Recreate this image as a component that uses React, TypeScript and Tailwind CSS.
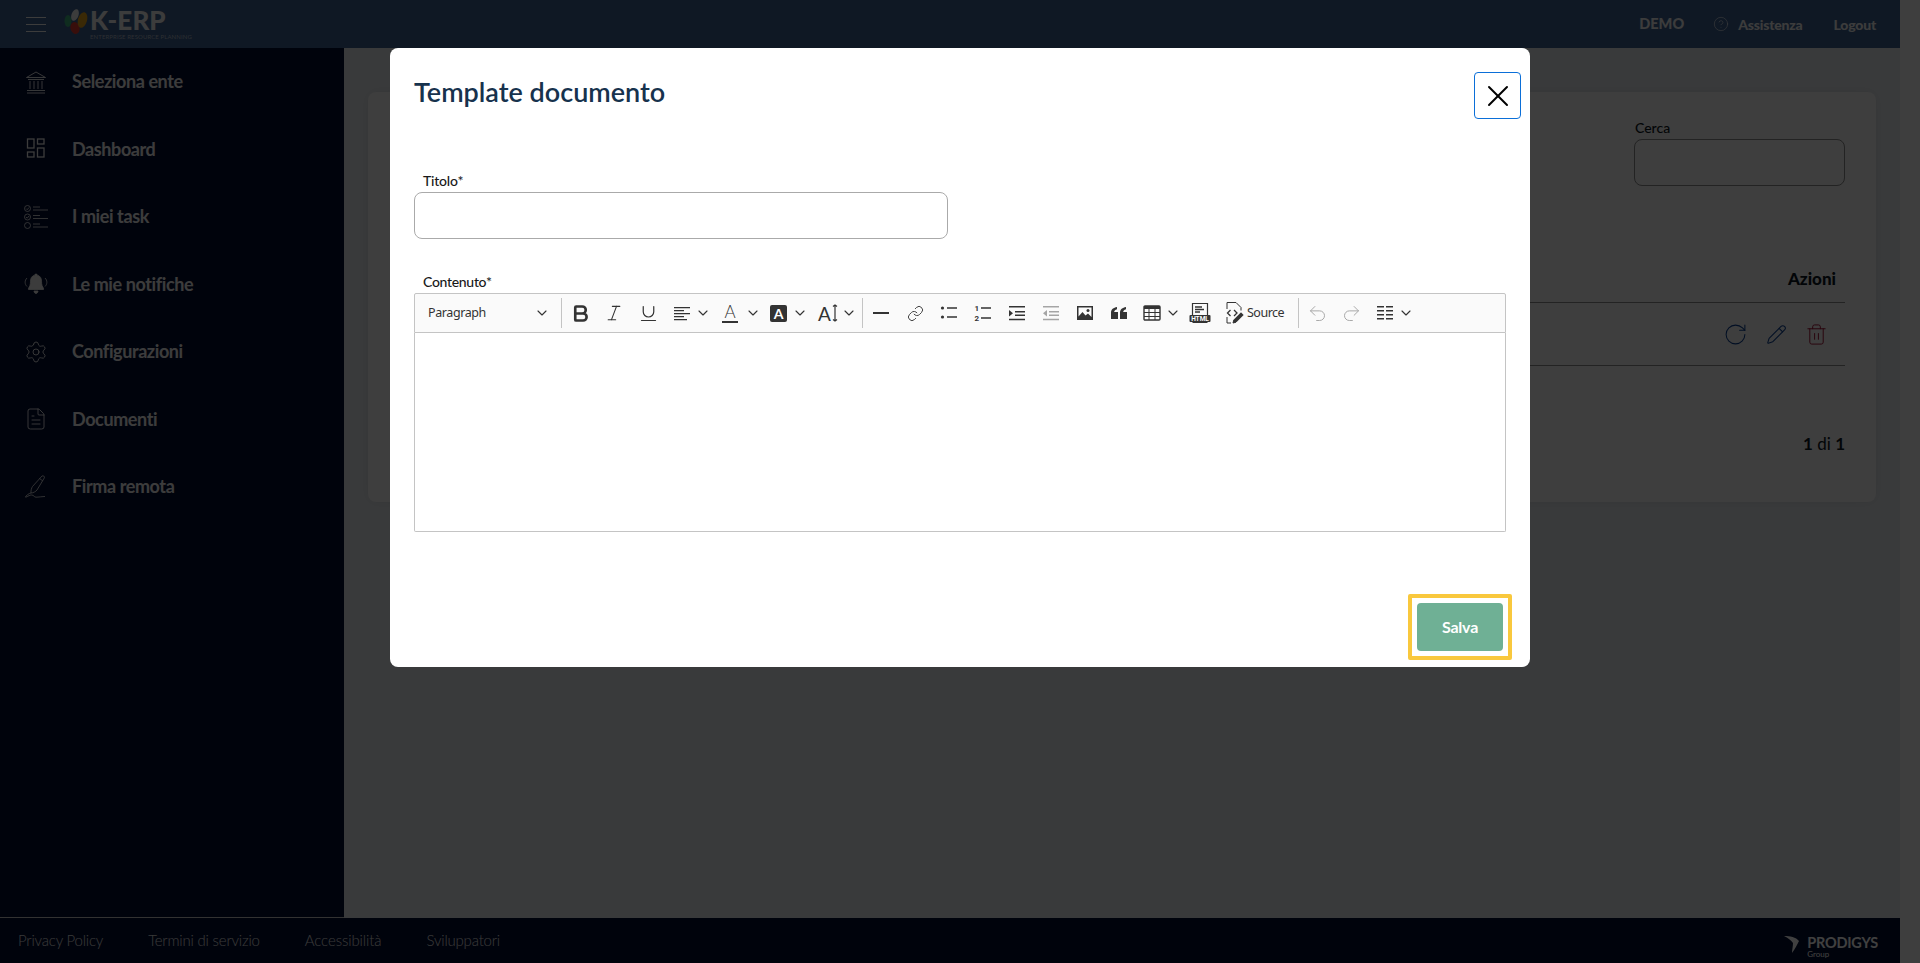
import { ChevronDown, CircleHelp, FileText, Italic, Bold, Underline, Link, Pencil, Redo2, RotateCw, Settings, Trash2, Undo2, X } from "lucide-react";
import type { ReactNode } from "react";

// sidebar icons that lucide does not have in this thin outlined shape
const BankIcon = () => (
  <svg width="24" height="24" viewBox="0 0 24 24" fill="none" stroke="currentColor" strokeWidth="0.900">
    <path d="M2.500 7.500 12 2l9.500 5.500zM4 9.500h16M6 11v8M10 11v8M14 11v8M18 11v8M3 20.500h18M3 23h18" />
  </svg>
);

const GridIcon = () => (
  <svg width="24" height="24" viewBox="0 0 24 24" fill="none" stroke="currentColor" strokeWidth="1.300">
    <rect x="3.500" y="2" width="6.500" height="9" />
    <rect x="13.500" y="2" width="6.500" height="5" />
    <rect x="3.500" y="15" width="6.500" height="5" />
    <rect x="13.500" y="11" width="6.500" height="9" />
  </svg>
);

const TaskIcon = () => (
  <svg width="24" height="24" viewBox="0 0 24 24" fill="none" stroke="currentColor" strokeWidth="0.800">
    <circle cx="3.500" cy="3.500" r="3" />
    <circle cx="3.500" cy="12" r="3" />
    <circle cx="3.500" cy="20.500" r="3" />
    <path d="m2 3.500 1.200 1.200L5 2.500M2 12l1.200 1.200L5 11M9 2h7M9 5h15M9 10.500h7M9 13.500h15M9 19h7M9 22h15" />
  </svg>
);

const BellIcon = () => (
  <svg width="24" height="24" viewBox="0 0 24 24" fill="currentColor" stroke="currentColor" strokeWidth="0.800">
    <path d="M12 2c.8 0 1.300.5 1.300 1.200 3 .7 4.200 3 4.200 6 0 4 1 5.500 2 7v1.300h-15V16.200c1-1.500 2-3 2-7 0-3 1.200-5.300 4.200-6C10.700 2.500 11.200 2 12 2zM10 19h4c0 1.200-.8 2.500-2 2.500s-2-1.300-2-2.500z" />
    <path fill="none" d="M3 6c-2.500 2.500-2.500 6 0 8.500M21 6c2.500 2.500 2.500 6 0 8.500" />
  </svg>
);

const SignIcon = () => (
  <svg width="24" height="24" viewBox="0 0 24 24" fill="none" stroke="currentColor" strokeWidth="0.800">
    <path d="M18 1c1.200-.6 2.800.3 2.400 1.800L13 15c-1 1.500-4 3-6 3-.2-2.500.5-5 1.500-6.500zM15.500 3.500l3.200 2.300M7 18c-2 .2-5.500 3-5.500 4s3.500-2 6-2 2.500 2.200 4.500 2.200 7-.7 9-.7" />
  </svg>
);

const navItems: { label: string; icon: ReactNode }[] = [
  { label: "Seleziona ente", icon: <BankIcon /> },
  { label: "Dashboard", icon: <GridIcon /> },
  { label: "I miei task", icon: <TaskIcon /> },
  { label: "Le mie notifiche", icon: <BellIcon /> },
  { label: "Configurazioni", icon: <Settings size={24} strokeWidth={0.900} /> },
  { label: "Documenti", icon: <FileText size={24} strokeWidth={0.900} /> },
  { label: "Firma remota", icon: <SignIcon /> },
];

const Svg = ({ children }: { children: ReactNode }) => (
  <svg width="20" height="20" viewBox="0 0 20 20" fill="currentColor">
    {children}
  </svg>
);

// editor toolbar icons
const AlignIcon = () => (
  <Svg>
    <path d="M2 4h16v1.300H2zM2 7h10v1.300H2zM2 10h16v1.300H2zM2 13h10v1.300H2zM2 16h13v1.300H2z" />
  </Svg>
);
const HrIcon = () => (
  <Svg>
    <path d="M2 9h16v2H2z" />
  </Svg>
);
const BulletIcon = () => (
  <Svg>
    <circle cx="3.500" cy="5" r="1.600" />
    <circle cx="3.500" cy="14" r="1.600" />
    <path d="M8 4.300h10v1.400H8zM8 13.300h10v1.400H8z" />
  </Svg>
);
const NumberIcon = () => (
  <svg width="20" height="20" viewBox="0 0 20 20" fill="currentColor">
    <path d="M8 4.300h10v1.400H8zM8 14.300h10v1.400H8z" />
    <text x="1.500" y="7.500" fontSize="8" fontWeight="700" fontFamily="Roboto, sans-serif">1</text>
    <text x="1.500" y="18" fontSize="8" fontWeight="700" fontFamily="Roboto, sans-serif">2</text>
  </svg>
);
const IndentIcon = ({ out }: { out?: boolean }) => (
  <Svg>
    <path d="M2 3h16v1.400H2zM8 8h10v1.400H8zM8 11.500h10v1.400H8zM2 15.800h16v1.400H2z" />
    {out ? <path d="M6 7v6.500L2 10.200z" /> : <path d="M2 7v6.500l4-3.300z" />}
  </Svg>
);
const ImageIcon = () => (
  <Svg>
    <path fillRule="evenodd" d="M2 3h16v14H2zm1.500 1.500v9l4-4.500 3 3.500 2.500-2 3.500 3.500V4.500z" />
    <circle cx="13" cy="7.500" r="1.500" />
  </Svg>
);
const QuoteIcon = () => (
  <Svg>
    <path d="M2 16V9.500C2 6.500 4.500 4.500 8 4v2.200C6 6.700 5.200 7.800 5.200 9H9v7zM11 16V9.500C11 6.500 13.500 4.500 17 4v2.200c-2 .5-2.800 1.600-2.800 2.800H18v7z" />
  </Svg>
);
const TableIcon = () => (
  <svg width="20" height="20" viewBox="0 0 20 20" fill="none" stroke="currentColor" strokeWidth="1">
    <rect x="2" y="3" width="16" height="14" rx="1" strokeWidth="1.400" />
    <path d="M2 4.500h16" strokeWidth="3" />
    <path d="M7 6v11M13 6v11M2 9.500h16M2 13.500h16" />
  </svg>
);
const HtmlIcon = () => (
  <svg width="22" height="22" viewBox="0 0 22 22" fill="none" stroke="currentColor" strokeWidth="1.200">
    <path d="M3.500 13V1.500h15V13M3.500 20.500h15" />
    <path d="M6 5h7M6 7.500h9M6 10h5" strokeWidth="1.300" />
    <rect x="0.500" y="13" width="21" height="7" rx="1" fill="currentColor" stroke="none" />
    <text x="11" y="19" textAnchor="middle" fontSize="6.500" fontWeight="700" fill="#fafafa" stroke="none" fontFamily="Roboto, sans-serif">HTML</text>
  </svg>
);
const SourceIcon = () => (
  <svg width="20" height="24" viewBox="0 0 20 24" fill="none" stroke="currentColor" strokeWidth="1" className="shrink-0">
    <path d="M2 8V1.500h9l5 5v3M2 16v6h4" />
    <path d="M5.500 9 2.500 12l3 3M9 9l3 3-3 3" strokeWidth="1.300" />
    <path d="m8 22 .8-3L16 11.800l2.200 2.200L11 21.200z" fill="currentColor" />
  </svg>
);
const BlocksIcon = () => (
  <Svg>
    <path d="M2 3h7v1.500H2zM11 3h7v1.500h-7zM2 7h7v1.500H2zM11 7h7v1.500h-7zM2 11h7v1.500H2zM11 11h7v1.500h-7zM2 15h7v1.500H2zM11 15h7v1.500h-7z" />
  </Svg>
);

const Chevron = () => <ChevronDown size={16} strokeWidth={1.700} className="shrink-0" />;

const ToolButton = ({ children, muted }: { children: ReactNode; muted?: boolean }) => (
  <div className={`flex h-[34px] w-[34px] items-center justify-center ${muted ? "text-[#a5a5a5]" : "text-[#333333]"}`}>
    {children}
  </div>
);

const ToolDropdown = ({ children, className }: { children: ReactNode; className: string }) => (
  <div className={`flex h-[34px] items-center text-[#333333] ${className}`}>
    {children}
    <Chevron />
  </div>
);

const ToolSeparator = () => <div className="mx-[1px] h-[30px] w-px bg-[#c4c4c4]" />;

const EditorToolbar = () => (
  <div className="flex h-[40px] items-center rounded-t-[2px] border border-[#c4c4c4] bg-[#fafafa] pl-[13px]">
    <div className="flex w-[132px] items-center justify-between pr-[10px] text-[#333333]">
      <span className="font-['Noto_Sans',sans-serif] text-[12.500px] tracking-[-0.400px]">Paragraph</span>
      <Chevron />
    </div>
    <ToolSeparator />
    <div className="flex items-center">
      <ToolButton><Bold size={21} strokeWidth={3} /></ToolButton>
      <ToolButton><Italic size={20} strokeWidth={1.300} /></ToolButton>
      <ToolButton><Underline size={21} strokeWidth={1.400} /></ToolButton>
      <ToolDropdown className="w-[47px] gap-[3px] pl-[7px]"><AlignIcon /></ToolDropdown>
      <ToolDropdown className="w-[50px] gap-[7px] pl-[10px]">
        <div className="flex w-[16px] flex-col items-center border-b-2 border-[#333333] text-[17px] leading-[18px] font-light">A</div>
      </ToolDropdown>
      <ToolDropdown className="w-[47px] gap-[5px] pl-[8px]">
        <div className="flex h-[17px] w-[17px] items-center justify-center rounded-[2px] bg-[#333333] text-[14px] font-bold text-white">A</div>
      </ToolDropdown>
      <ToolDropdown className="w-[52px] gap-[3px] pl-[9px]">
        <div className="flex items-center gap-[1px] text-[19px] leading-none">
          A
          <svg width="6" height="18" viewBox="0 0 6 18" fill="none" stroke="currentColor" strokeWidth="1.200">
            <path d="M3 1v16M1 2.500 3 1l2 1.500M1 15.500 3 17l2-1.500" />
          </svg>
        </div>
      </ToolDropdown>
    </div>
    <ToolSeparator />
    <div className="flex items-center">
      <ToolButton><HrIcon /></ToolButton>
      <ToolButton><Link size={17} strokeWidth={1.300} /></ToolButton>
      <ToolButton><BulletIcon /></ToolButton>
      <ToolButton><NumberIcon /></ToolButton>
      <ToolButton><IndentIcon /></ToolButton>
      <ToolButton muted><IndentIcon out /></ToolButton>
      <ToolButton><ImageIcon /></ToolButton>
      <ToolButton><QuoteIcon /></ToolButton>
      <ToolDropdown className="w-[47px] gap-[3px] pl-[6px]"><TableIcon /></ToolDropdown>
      <ToolButton><HtmlIcon /></ToolButton>
      <div className="ml-[8px] flex h-[34px] w-[72px] items-center gap-[2px] text-[#333333]">
        <SourceIcon />
        <span className="font-['Noto_Sans',sans-serif] text-[12.500px] tracking-[-0.500px]">Source</span>
      </div>
    </div>
    <ToolSeparator />
    <div className="flex items-center">
      <ToolButton muted><Undo2 size={21} strokeWidth={1.100} /></ToolButton>
      <ToolButton muted><Redo2 size={21} strokeWidth={1.100} /></ToolButton>
      <ToolDropdown className="w-[47px] gap-[3px] pl-[7px]"><BlocksIcon /></ToolDropdown>
    </div>
  </div>
);

const KerpLogo = () => (
  <div className="flex items-start gap-[2px]">
    <svg width="24" height="26" viewBox="0 0 24 26">
      <ellipse cx="4" cy="13" rx="3.500" ry="6" fill="#3fae7c" />
      <ellipse cx="11" cy="7" rx="3.500" ry="6" fill="#f0f0f0" transform="rotate(20 11 7)" />
      <ellipse cx="11" cy="20" rx="4.500" ry="6" fill="#e03a2f" transform="rotate(-15 11 20)" />
      <ellipse cx="18.500" cy="12" rx="4.500" ry="8" fill="#e8a21a" transform="rotate(15 18.500 12)" />
    </svg>
    <div className="flex flex-col">
      <span className="text-[26px] leading-[25px] font-black tracking-[0.100px] text-[#f0f0f0]">K-ERP</span>
      <span className="text-[6px] leading-[7px] tracking-[0.100px] whitespace-nowrap text-[#b0b8c4]">ENTERPRISE RESOURCE PLANNING</span>
    </div>
  </div>
);

const Topbar = () => (
  <header className="flex h-12 shrink-0 items-center bg-[#3c6090] pr-6 pl-[26px] text-[#eeeeee]">
    <div className="mr-[18px] flex w-[20px] flex-col gap-[6px]">
      <div className="h-px bg-[#f0f0f0]" />
      <div className="h-px bg-[#f0f0f0]" />
      <div className="h-px bg-[#f0f0f0]" />
    </div>
    <KerpLogo />
    <div className="ml-auto flex items-center text-[14px] font-black">
      <span className="mr-[29px] text-[14.500px]">DEMO</span>
      <CircleHelp size={16} strokeWidth={0.900} className="mr-[9px]" />
      <span className="mr-[31px] tracking-[-0.200px]">Assistenza</span>
      <span className="tracking-[-0.200px]">Logout</span>
    </div>
  </header>
);

const Sidebar = () => (
  <aside className="flex w-[344px] shrink-0 flex-col border-b border-[#c8c8c8] bg-[#000c30]">
    {navItems.map((item) => (
      <div key={item.label} className="flex h-[67.500px] items-center pl-6 text-[#f0f0f0]">
        <div className="flex w-[48px] items-center">{item.icon}</div>
        <span className="text-[18px] font-bold tracking-[-0.400px]">{item.label}</span>
      </div>
    ))}
  </aside>
);

const BackgroundCard = () => (
  <main className="flex-1 bg-[#e4e8ec] px-6 pt-[44px]">
    <div className="flex h-[410px] flex-col rounded-lg bg-[#f5f5f5] pt-[28px] pr-[31px] pl-6 text-[#0a1420] shadow-[0_0_12px_rgba(0,0,0,0.08)]">
      <div className="ml-auto w-[211px]">
        <label className="mb-[3px] block pl-[1px] text-[14px] leading-4 font-medium">Cerca</label>
        <div className="h-[47px] rounded-lg border border-[#8a8a8a]" />
      </div>
      <div className="mt-[70px] flex h-[47px] items-center justify-end border-b border-[#8a8a8a] pr-[9px] text-[17px] font-black">Azioni</div>
      <div className="flex h-[63px] items-center justify-end gap-[18px] border-b border-[#8a8a8a] pr-[17px]">
        <RotateCw size={25} strokeWidth={1} className="text-[#0b3f8f]" />
        <Pencil size={21} strokeWidth={1.200} className="text-[#0b3f8f]" />
        <Trash2 size={23} strokeWidth={1} className="text-[#a00d30]" />
      </div>
      <div className="mt-[67px] text-right text-[17px] leading-[22px]">
        <b>1</b> di <b>1</b>
      </div>
    </div>
  </main>
);

const Footer = () => (
  <footer className="flex h-[45px] shrink-0 items-center justify-between bg-[#000c30] pr-[22px] pl-[18px]">
    <div className="flex gap-[45px] text-[15px] font-light tracking-[-0.200px] text-[#e0e0e0]">
      <span>Privacy Policy</span>
      <span>Termini di servizio</span>
      <span className="tracking-[-0.100px]">Accessibilità</span>
      <span>Sviluppatori</span>
    </div>
    <div className="mt-[13px] flex items-start gap-[7px] text-white">
      <svg width="16" height="18" viewBox="0 0 16 18" fill="currentColor">
        <path d="M0 0c6 0 12 1 15 5-2 4-4 8-7 12 0-3 1-7 1-10C7 4 4 2 0 0z" />
      </svg>
      <div className="flex flex-col">
        <span className="text-[14.500px] leading-[14px] font-bold tracking-[-0.200px]">PRODIGYS</span>
        <span className="text-[8px] leading-[9px]">Group</span>
      </div>
    </div>
  </footer>
);

const TemplateModal = () => (
  <div className="absolute inset-0 flex justify-center bg-black/75 pt-12">
    <div className="flex h-[619px] w-[1140px] flex-col rounded-lg bg-white">
      <div className="flex items-start justify-between pt-6 pr-[9px] pl-6">
        <h2 className="text-[27px] leading-[40px] font-semibold text-[#17324d]">Template documento</h2>
        <button className="flex h-[47px] w-[47px] items-center justify-center rounded border border-[#0b6fd8] bg-white text-black">
          <X size={36} strokeWidth={1.300} />
        </button>
      </div>
      <div className="mt-[54px] flex flex-col px-6 text-[#19191a]">
        <label className="mb-[3px] pl-[9px] text-[14px] leading-4 font-medium tracking-[-0.200px]">Titolo*</label>
        <div className="h-[47px] w-[534px] rounded-lg border border-[#aaaaaa]" />
        <label className="mt-[35px] mb-[3px] pl-[9px] text-[14px] leading-4 font-medium tracking-[-0.300px]">Contenuto*</label>
        <EditorToolbar />
        <div className="h-[199px] rounded-b-[2px] border border-t-0 border-[#c4c4c4]" />
      </div>
      <div className="mt-auto flex justify-end pr-[18px] pb-[7px]">
        <div className="rounded-[2px] border-4 border-[#f9c83d] p-[5px]">
          <button className="h-12 w-[86px] rounded bg-[#6fb095] text-[16px] font-bold tracking-[-0.200px] text-white">Salva</button>
        </div>
      </div>
    </div>
  </div>
);

export default function App() {
  return (
    <div className="relative flex h-screen overflow-hidden bg-[#f8f8f8] font-['Lato',sans-serif]">
      <div className="flex min-w-0 flex-1 flex-col">
        <Topbar />
        <div className="flex min-h-0 flex-1">
          <Sidebar />
          <BackgroundCard />
        </div>
        <Footer />
      </div>
      {/* scrollbar strip */}
      <div className="w-5 shrink-0" />
      <TemplateModal />
    </div>
  );
}
